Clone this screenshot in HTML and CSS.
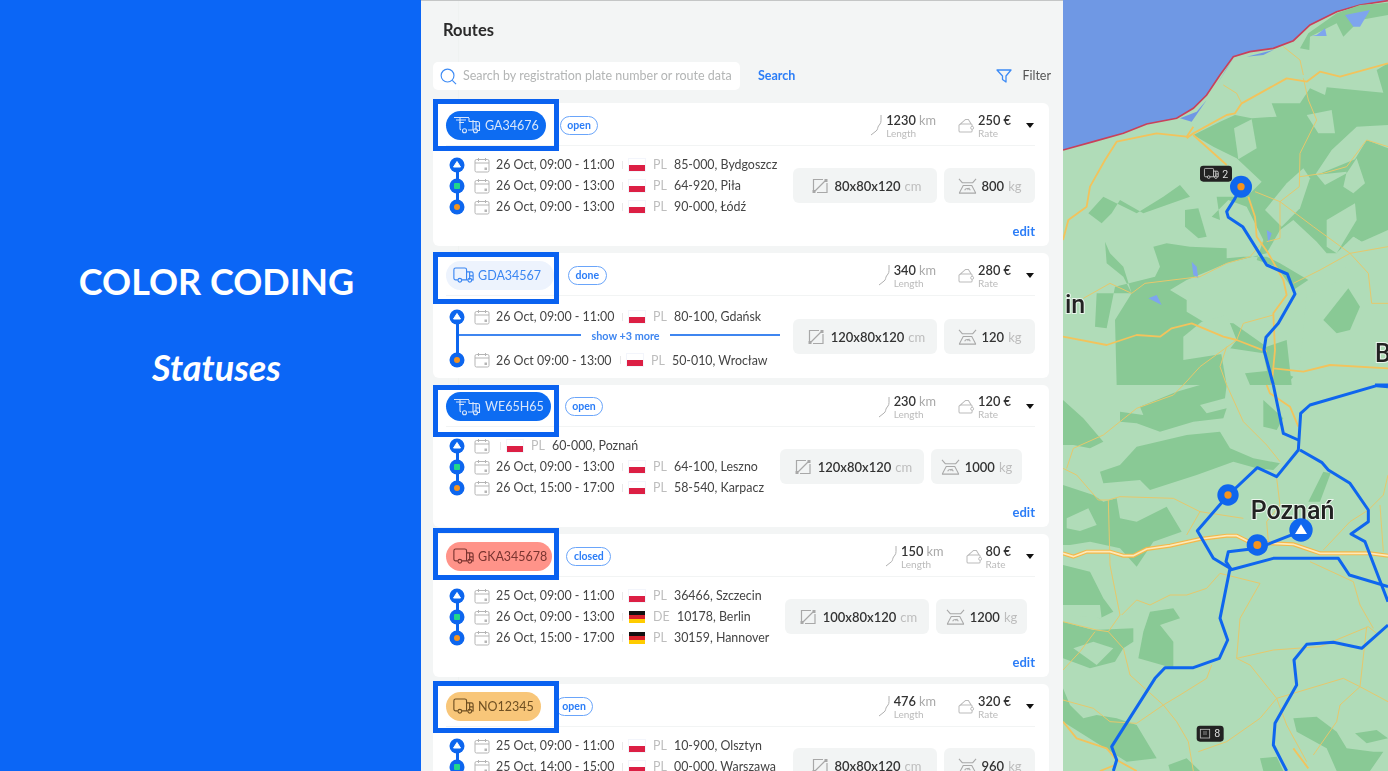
FILE: index.html
```html
<!DOCTYPE html>
<html lang="en">
<head>
<meta charset="utf-8">
<title>Routes - Color coding</title>
<link rel="stylesheet" href="styles.css">
</head>
<body>
<svg class="defs" width="0" height="0" aria-hidden="true">
  <symbol id="truck" viewBox="0 0 24 18"><path d="M5.500 14.500H3a2 2 0 0 1-2-2V3a2 2 0 0 1 2-2h10.500a2 2 0 0 1 2 2v11.500H10M15.500 5.500h5.500a2 2 0 0 1 2 2v7h-1.500M15.500 14.500H17M19 5.500v9M19 10h4" fill="none" stroke="currentColor" stroke-width="1.300"/><circle cx="7.800" cy="15" r="2.100" fill="none" stroke="currentColor" stroke-width="1.300"/><circle cx="19.200" cy="15" r="2.100" fill="none" stroke="currentColor" stroke-width="1.300"/></symbol>
  <symbol id="truckfast" viewBox="0 0 28 18"><path d="M1 1.500h15M3 4h10M6 6.500h5M7 2v10.500a1.500 1.500 0 0 0 1 1.500M15 14h5M16 2v3.500M20 4v10M16 5.500h8.500a2 2 0 0 1 2 2v7H25M23 5.500v9M23 10h3.500" fill="none" stroke="currentColor" stroke-width="1.100"/><circle cx="11.500" cy="14.800" r="2" fill="none" stroke="currentColor" stroke-width="1.100"/><circle cx="22.500" cy="14.800" r="2" fill="none" stroke="currentColor" stroke-width="1.100"/></symbol>
  <symbol id="cal" viewBox="0 0 16 16"><path d="M2.500 2.500h11a1.500 1.500 0 0 1 1.500 1.500v9.500a1.500 1.500 0 0 1-1.500 1.500h-11A1.500 1.500 0 0 1 1 13.500V4a1.500 1.500 0 0 1 1.500-1.500zM1 6h14M4.500 1v3M11.500 1v3" fill="none" stroke="#b5b5b5"/><rect x="10.500" y="10.500" width="2.500" height="2.500" fill="#b5b5b5"/></symbol>
  <symbol id="road" viewBox="0 0 12 22"><path d="M11 1v5.500c0 1.500-.3 2.500-1 3.500L8.500 12c-.5.800-.7 1.500-.9 2.500-.2 1-.5 1.700-1.500 2.500L1 21" fill="none" stroke="#b0b0b0" stroke-width="1"/></symbol>
  <symbol id="wallet" viewBox="0 0 18 16"><path d="M1 7.500 8 1.500h3l3 5M1 7.500V13.500A1.500 1.500 0 0 0 2.500 15h11a1.500 1.500 0 0 0 1.500-1.500V12M1 7.500 3 6.500h11a1.500 1.500 0 0 1 1 1.500v1" fill="none" stroke="#bbb" stroke-width="1.100"/><circle cx="15" cy="10.500" r="1.600" fill="#fff" stroke="#bbb"/></symbol>
  <symbol id="size" viewBox="0 0 16 16"><path d="M11 1.500H1.500V12M15 5v9.500H5M3 13 13 3" fill="none" stroke="#a8a8a8" stroke-width="1.200"/><rect x="12.500" y="1" width="3" height="3" fill="#a8a8a8"/><rect x=".500" y="12" width="3" height="3" fill="#a8a8a8"/></symbol>
  <symbol id="weight" viewBox="0 0 20 16"><path d="M1 .500 4.500 4.500H15.500L19 .500M1 15.500H19M1.500 15 5.500 7.500H14.500L18.500 15M7 12.500C8 10 12 10 13 12.500M10 12l2-2" fill="none" stroke="#a8a8a8" stroke-width="1.100"/></symbol>
  <symbol id="pinup" viewBox="0 0 16 16"><circle cx="8" cy="8" r="7.500" fill="#0d66ee"/><path d="M8 4.500l3.500 5.500h-7z" fill="#fff" stroke="#fff" stroke-linejoin="round"/></symbol>
  <symbol id="pinmid" viewBox="0 0 16 16"><circle cx="8" cy="8" r="7.500" fill="#0d66ee"/><rect x="5" y="5" width="6" height="6" rx="1" fill="#22d68a"/></symbol>
  <symbol id="pinend" viewBox="0 0 16 16"><circle cx="8" cy="8" r="7.500" fill="#0d66ee"/><circle cx="8" cy="8" r="3" fill="#f5931e"/></symbol>
</svg>

<main class="page">
  <section class="side">
    <h1 class="side-title">COLOR CODING</h1>
    <p class="side-sub">Statuses</p>
  </section>

  <section class="panel">
    <h2 class="panel-title">Routes</h2>
    <div class="toolbar">
      <div class="search">
        <svg class="search-icon" viewBox="0 0 18 18"><circle cx="8" cy="8" r="6.800" fill="none" stroke="#3d8bf5" stroke-width="1.200"/><path d="M13 13l4 4" stroke="#3d8bf5" stroke-width="1.200"/></svg>
        <span class="search-text">Search by registration plate number or route data</span>
      </div>
      <a class="search-link">Search</a>
      <div class="filter">
        <svg class="filter-icon" viewBox="0 0 16 14"><path d="M1 1h14L10 7v6L6.500 10.500V7z" fill="none" stroke="#3d8bf5" stroke-width="1.300" stroke-linejoin="round"/></svg>
        <span>Filter</span>
      </div>
    </div>

    <div class="cards">
      <!-- 1 -->
      <article class="card">
        <span class="mark mark-1"></span>
        <header class="card-head">
          <span class="badge badge-open"><svg class="ico-fast"><use href="#truckfast"/></svg>GA34676</span>
          <span class="tag">open</span>
          <div class="stats">
            <div class="stat"><svg class="ico-road"><use href="#road"/></svg><div><div class="val">1230 <i>km</i></div><div class="lab">Length</div></div></div>
            <div class="stat"><svg class="ico-wallet"><use href="#wallet"/></svg><div><div class="val">250 €</div><div class="lab">Rate</div></div></div>
            <span class="caret"></span>
          </div>
        </header>
        <div class="card-body">
          <div class="stops">
            <div class="stop"><svg class="pin"><use href="#pinup"/></svg><svg class="cal"><use href="#cal"/></svg><span class="date">26 Oct, 09:00 - 11:00</span><span class="flag pl"></span><span class="cc">PL</span><span class="addr">85-000, Bydgoszcz</span></div>
            <div class="stop"><svg class="pin"><use href="#pinmid"/></svg><svg class="cal"><use href="#cal"/></svg><span class="date">26 Oct, 09:00 - 13:00</span><span class="flag pl"></span><span class="cc">PL</span><span class="addr">64-920, Piła</span></div>
            <div class="stop"><svg class="pin"><use href="#pinend"/></svg><svg class="cal"><use href="#cal"/></svg><span class="date">26 Oct, 09:00 - 13:00</span><span class="flag pl"></span><span class="cc">PL</span><span class="addr">90-000, Łódź</span></div>
          </div>
          <div class="specs">
            <div class="spec spec-size"><svg class="ico-size"><use href="#size"/></svg><b>80x80x120</b><i>cm</i></div>
            <div class="spec spec-weight"><svg class="ico-weight"><use href="#weight"/></svg><b>800</b><i>kg</i></div>
          </div>
        </div>
        <a class="edit">edit</a>
      </article>

      <!-- 2 -->
      <article class="card">
        <span class="mark mark-2"></span>
        <header class="card-head">
          <span class="badge badge-done"><svg class="ico-truck"><use href="#truck"/></svg>GDA34567</span>
          <span class="tag">done</span>
          <div class="stats">
            <div class="stat"><svg class="ico-road"><use href="#road"/></svg><div><div class="val">340 <i>km</i></div><div class="lab">Length</div></div></div>
            <div class="stat"><svg class="ico-wallet"><use href="#wallet"/></svg><div><div class="val">280 €</div><div class="lab">Rate</div></div></div>
            <span class="caret"></span>
          </div>
        </header>
        <div class="card-body card-body-short">
          <div class="stops stops-long">
            <div class="stop"><svg class="pin"><use href="#pinup"/></svg><svg class="cal"><use href="#cal"/></svg><span class="date">26 Oct, 09:00 - 11:00</span><span class="flag pl"></span><span class="cc">PL</span><span class="addr">80-100, Gdańsk</span></div>
            <div class="more"><span class="more-line more-left"></span><span class="more-text">show +3 more</span><span class="more-line more-right"></span></div>
            <div class="stop stop-tight"><svg class="pin"><use href="#pinend"/></svg><svg class="cal"><use href="#cal"/></svg><span class="date date-short">26 Oct 09:00 - 13:00</span><span class="flag pl"></span><span class="cc">PL</span><span class="addr">50-010, Wrocław</span></div>
          </div>
          <div class="specs specs-raised">
            <div class="spec spec-size"><svg class="ico-size"><use href="#size"/></svg><b>120x80x120</b><i>cm</i></div>
            <div class="spec spec-weight"><svg class="ico-weight"><use href="#weight"/></svg><b>120</b><i>kg</i></div>
          </div>
        </div>
      </article>

      <!-- 3 -->
      <article class="card card-slim">
        <span class="mark mark-3"></span>
        <header class="card-head">
          <span class="badge badge-open"><svg class="ico-fast"><use href="#truckfast"/></svg>WE65H65</span>
          <span class="tag">open</span>
          <div class="stats">
            <div class="stat"><svg class="ico-road"><use href="#road"/></svg><div><div class="val">230 <i>km</i></div><div class="lab">Length</div></div></div>
            <div class="stat"><svg class="ico-wallet"><use href="#wallet"/></svg><div><div class="val">120 €</div><div class="lab">Rate</div></div></div>
            <span class="caret"></span>
          </div>
        </header>
        <div class="card-body">
          <div class="stops">
            <div class="stop"><svg class="pin"><use href="#pinup"/></svg><svg class="cal"><use href="#cal"/></svg><span class="flag pl flag-nodate"></span><span class="cc">PL</span><span class="addr">60-000, Poznań</span></div>
            <div class="stop"><svg class="pin"><use href="#pinmid"/></svg><svg class="cal"><use href="#cal"/></svg><span class="date">26 Oct, 09:00 - 13:00</span><span class="flag pl"></span><span class="cc">PL</span><span class="addr">64-100, Leszno</span></div>
            <div class="stop"><svg class="pin"><use href="#pinend"/></svg><svg class="cal"><use href="#cal"/></svg><span class="date">26 Oct, 15:00 - 17:00</span><span class="flag pl"></span><span class="cc">PL</span><span class="addr">58-540, Karpacz</span></div>
          </div>
          <div class="specs specs-inset-l">
            <div class="spec spec-size"><svg class="ico-size"><use href="#size"/></svg><b>120x80x120</b><i>cm</i></div>
            <div class="spec spec-weight"><svg class="ico-weight"><use href="#weight"/></svg><b>1000</b><i>kg</i></div>
          </div>
        </div>
        <a class="edit">edit</a>
      </article>

      <!-- 4 -->
      <article class="card">
        <span class="mark mark-4"></span>
        <header class="card-head">
          <span class="badge badge-closed"><svg class="ico-truck"><use href="#truck"/></svg>GKA345678</span>
          <span class="tag">closed</span>
          <div class="stats">
            <div class="stat"><svg class="ico-road"><use href="#road"/></svg><div><div class="val">150 <i>km</i></div><div class="lab">Length</div></div></div>
            <div class="stat"><svg class="ico-wallet"><use href="#wallet"/></svg><div><div class="val">80 €</div><div class="lab">Rate</div></div></div>
            <span class="caret"></span>
          </div>
        </header>
        <div class="card-body">
          <div class="stops">
            <div class="stop"><svg class="pin"><use href="#pinup"/></svg><svg class="cal"><use href="#cal"/></svg><span class="date">25 Oct, 09:00 - 11:00</span><span class="flag pl"></span><span class="cc">PL</span><span class="addr">36466, Szczecin</span></div>
            <div class="stop"><svg class="pin"><use href="#pinmid"/></svg><svg class="cal"><use href="#cal"/></svg><span class="date">26 Oct, 09:00 - 13:00</span><span class="flag de"></span><span class="cc cc-wide">DE</span><span class="addr">10178, Berlin</span></div>
            <div class="stop"><svg class="pin"><use href="#pinend"/></svg><svg class="cal"><use href="#cal"/></svg><span class="date">26 Oct, 15:00 - 17:00</span><span class="flag de"></span><span class="cc">PL</span><span class="addr">30159, Hannover</span></div>
          </div>
          <div class="specs specs-inset-s">
            <div class="spec spec-size"><svg class="ico-size"><use href="#size"/></svg><b>100x80x120</b><i>cm</i></div>
            <div class="spec spec-weight"><svg class="ico-weight"><use href="#weight"/></svg><b>1200</b><i>kg</i></div>
          </div>
        </div>
        <a class="edit">edit</a>
      </article>

      <!-- 5 -->
      <article class="card">
        <span class="mark mark-5"></span>
        <header class="card-head">
          <span class="badge badge-late"><svg class="ico-truck"><use href="#truck"/></svg>NO12345</span>
          <span class="tag">open</span>
          <div class="stats">
            <div class="stat"><svg class="ico-road"><use href="#road"/></svg><div><div class="val">476 <i>km</i></div><div class="lab">Length</div></div></div>
            <div class="stat"><svg class="ico-wallet"><use href="#wallet"/></svg><div><div class="val">320 €</div><div class="lab">Rate</div></div></div>
            <span class="caret"></span>
          </div>
        </header>
        <div class="card-body card-body-top">
          <div class="stops">
            <div class="stop"><svg class="pin"><use href="#pinup"/></svg><svg class="cal"><use href="#cal"/></svg><span class="date">25 Oct, 09:00 - 11:00</span><span class="flag pl"></span><span class="cc">PL</span><span class="addr">10-900, Olsztyn</span></div>
            <div class="stop"><svg class="pin"><use href="#pinmid"/></svg><svg class="cal"><use href="#cal"/></svg><span class="date">25 Oct, 14:00 - 15:00</span><span class="flag pl"></span><span class="cc">PL</span><span class="addr">00-000, Warszawa</span></div>
          </div>
          <div class="specs specs-low">
            <div class="spec spec-size"><svg class="ico-size"><use href="#size"/></svg><b>80x80x120</b><i>cm</i></div>
            <div class="spec spec-weight"><svg class="ico-weight"><use href="#weight"/></svg><b>960</b><i>kg</i></div>
          </div>
        </div>
      </article>
    </div>
  </section>

  <section class="map">
    <svg class="map-svg" viewBox="9 0 975 2313" preserveAspectRatio="none">
      <rect x="9" y="0" width="975" height="2313" fill="#b0dcb8"/>
      <!-- sea -->
      <path class="sea" d="M9 0H984V2L900 15 830 35 750 75 700 122 640 145 570 155 520 170 480 225 440 285 400 325 350 355 260 372 190 400 100 425 9 450z"/>
      <path d="M360 355 410 335 440 300 395 365zM500 205 470 255 520 175zM640 150 560 170 610 165z" fill="#6f98e4"/>
      <path d="M9 450 100 425 190 400 260 372 350 355 400 325 440 285 480 225 520 170 570 155 640 145 700 122 750 75 830 35 900 15 984 2" fill="none" stroke="#c9405a" stroke-width="5"/>
      <!-- top half woods -->
      <g class="wood">
        <path d="M400 405 480 365 525 345 575 355 650 350 635 310 720 310 750 265 795 285 800 262 970 278 950 210 984 190V720L905 725 880 710 830 760 800 760 770 725 700 660 660 690 620 760 560 775 500 790 440 815 380 840 330 870 380 900 380 935 430 965 520 970 620 1040 680 1020 695 1155H170L165 960 215 880 190 800 150 760 135 725 140 790 190 830 215 880 110 880 105 980 140 985 165 860 285 830 300 800 280 740 320 730 390 740 500 745 500 775 550 770 555 770 620 770 660 790 745 840 700 870 650 800 590 780 610 720 560 620 505 600 455 650 480 660 470 590 500 590 560 590 605 545 530 475 460 440 400 405z"/>
        <path d="M85 640 130 590 230 640 310 590 360 555 390 590 250 640 180 600 155 640 125 670z"/>
        <path d="M375 630 415 625 440 710 415 715 375 680z"/>
        <path d="M720 145 745 100 830 40 900 15 984 8V45L900 60 850 110 830 70 750 110 748 150z"/>
      </g>
      <g class="light">
        <path d="M522 385 575 358 590 445 535 478z"/>
        <path d="M740 345 815 330 825 400 775 400z"/>
        <path d="M815 450 890 380 984 375V445L920 420 885 478 770 525 795 555 860 520 890 475 915 550 880 580 850 560 860 515 765 525z"/>
        <path d="M615 630 680 550 730 505 750 535 720 625 665 680z"/>
        <path d="M800 660 885 610 890 660 830 760 800 740z"/>
        <path d="M830 760 880 710 905 725 984 690V1155H700L720 1100 740 880 790 870 850 830 860 790 830 760z"/>
        <path d="M790 960 865 865 900 920 870 990 830 1000z" class="wood-fill"/>
        <path d="M425 965 500 945 530 1020 500 1060 370 1080 370 1010z"/>
        <path d="M480 1040 610 1060 630 1155H500z"/>
        <path d="M555 1120 650 1110 700 1130 680 1155H570z" class="wood-fill"/>
      </g>
      <path d="M770 105 795 85 800 108 755 108zM855 45 930 30 900 80 880 80zM620 690 635 700 625 730zM395 785 410 800 415 835 400 825zM265 895 290 885 305 915z" fill="#7ea5ee"/>
      <!-- top roads -->
      <g class="road">
        <path d="M670 140 720 180 730 225 M490 255 530 280 545 310M730 235 745 300 770 360 720 460 718 560 660 605 660 715 620 725M660 605 760 680 870 760 925 820 935 910H984M870 760 984 740M585 575 660 605M720 530 790 520 860 500 920 420 984 440M700 850 780 810 870 760M420 830 500 790 570 770 610 725M70 895 150 850 215 880 255 850 420 830M370 1155 420 1100 530 1020 550 970 640 945M500 1040 480 1100 500 1155"/>
      </g>
      <g class="road road-main">
        <path d="M380 415 400 400 500 345 525 340 545 310 680 235 740 245 780 215 840 230 984 190M9 720 25 660 80 620 90 560 135 480 170 425 290 400 380 410 400 380M400 405 500 495M565 590 585 650 590 710 625 760 670 840 680 885 640 940 645 1050 635 1155M9 1010 140 1035 230 1005 300 1010 335 985 395 970 490 1010 530 1020 620 1055M640 1105 730 1115 810 1095 984 1105"/>
      </g>
      <!-- bottom half -->
      <g transform="translate(0 1155)">
        <g class="wood">
          <path d="M120 260 180 240 230 185 380 150 480 140 510 190 580 220 660 235 640 255 590 250 520 230 410 270 270 315 240 285 130 295z"/>
          <path d="M180 80 250 90 240 65 350 20 420 0H500L495 40 420 60 440 85 500 70 490 100 400 110 300 140 230 115 180 110z"/>
          <path d="M9 45 70 100 130 170 90 190 40 180H9z"/>
          <path d="M9 300 100 330 130 350 170 340 180 400 230 410 320 365 365 440 280 470 230 545 180 490 90 470 30 480H9z"/>
          <path d="M9 540 90 560 130 640 160 680 120 700 9 660z"/>
          <path d="M9 710 100 735 220 730 220 770 190 790 165 830 90 850 9 820z"/>
          <path d="M270 680 340 670 360 700 300 720 340 770 340 850 235 820 250 740z"/>
          <path d="M9 910 30 960 70 1000 110 990 170 1000 230 1020 290 1120 200 1130 120 1080 9 1010z"/>
          <path d="M610 45 670 100 650 135 610 125z"/>
          <path d="M790 260 812 265 780 350 745 350z"/>
          <path d="M700 1000 770 995 830 1040 860 1090 940 1100 970 1100 930 1158H830L800 1090 710 1040z"/>
          <path d="M885 1045 950 1035 984 1060 920 1075z"/>
          <path d="M325 1140 380 1120 420 1158H330zM600 1120 650 1115 670 1158H610z"/>
        </g>
        <g class="light">
          <path d="M20 400 85 370 110 420 60 438 20 430z"/>
          <path d="M40 790 100 770 160 790 110 840z"/>
          <path d="M9 660 120 660 125 700 9 690z"/>
        </g>
        <g class="road">
          <path d="M500 0 550 110 620 180 660 230M650 280 660 360 620 410 625 470M550 400 420 380 340 340 180 335 145 345 115 345 50 270 9 250M20 250 40 190 130 150 230 70 340 30 370 0M145 345 150 540 180 690 145 740 190 790 210 870 310 960 350 1010 385 1070 400 1158M185 690 230 645 270 660 330 630 380 630 440 610 480 565 600 595 540 700 530 820 570 840 650 940 680 1020 740 1130M9 710 110 735 145 740M9 855 60 800 105 740M530 820 640 795 780 785 925 725 950 745M415 1100 500 1070 600 1000 650 940 850 880 900 905 984 950M900 905 920 725M900 905 840 960 830 1010 760 1110M310 960 360 930 440 880 455 840M9 945 100 970 150 1010 230 1015 310 960M880 590 900 660 940 730M790 495 870 410 925 375 970 330 984 270M960 360 970 500M750 530 880 590M420 380 380 450"/>
        </g>
        <g class="road road-main">
          <path d="M620 0 630 25 690 65 715 125M9 1010 50 1060 140 1090 170 1125 230 1158M120 1158 165 1140M700 1090 745 1150"/>
        </g>
        <path class="road-big" d="M9 505 40 515 80 500H150L190 512H220L260 492 330 482 420 462 500 452H530L570 472 700 478 780 505H930L984 512"/>
        <path class="road-big-in" d="M9 505 40 515 80 500H150L190 512H220L260 492 330 482 420 462 500 452H530L570 472 700 478 780 505H930L984 512"/>
        <!-- routes -->
        <g class="route">
          <path d="M640 0 670 145 715 165"/>
          <path d="M984 5 950 2 750 60 722 85 715 195 650 275 592 248 505 330 412 437 460 520 510 550 480 700 503 765 478 820 400 848H315L285 880 155 1085 170 1125 160 1158"/>
          <path d="M720 195 785 232 805 255 870 295 925 375V410L873 447 915 470 984 650"/>
          <path d="M510 555 640 520H835L868 570 984 605"/>
          <path d="M515 555 498 530 505 500 592 490 720 440"/>
          <path d="M984 720 905 790 820 772 740 778 702 825 710 900 645 1015 640 1080 680 1158"/>
        </g>
        <circle class="mk" cx="504" cy="330" r="32"/><circle class="mk-dot" cx="504" cy="330" r="11"/>
        <circle class="mk" cx="592" cy="480" r="32"/><circle class="mk-dot" cx="592" cy="480" r="12"/>
        <text class="city" x="572" y="403">Poznań</text>
        <circle class="mk" cx="723" cy="435" r="35"/>
        <path d="M723 418 741 447H705z" fill="#fff"/>
        <rect class="tip" x="410" y="1022" width="81" height="48" rx="10"/>
        <rect x="421" y="1033" width="28" height="26" fill="none" stroke="#bbb" stroke-width="2.500"/>
        <path d="M429 1041h12M429 1047h12" stroke="#bbb" stroke-width="2"/>
        <text class="tip-text" x="463" y="1057">8</text>
      </g>
      <!-- top route -->
      <path class="route-solo" d="M543 560 525 595 500 635 505 652 548 680 620 795 682 822 705 882 655 970 618 1012 612 1050 640 1155"/>
      <path class="route-solo" d="M945 1155H984"/>
      <circle class="mk" cx="543" cy="560" r="33"/><circle class="mk-dot" cx="543" cy="560" r="11"/>
      <rect class="tip" x="420" y="497" width="96" height="48" rx="10"/>
      <use href="#truck" x="430" y="503" width="48" height="34" class="tip-icon"/>
      <text class="tip-text" x="487" y="533">2</text>
      <text class="city" x="15" y="938">in</text>
      <text class="city" x="945" y="1086">B</text>
    </svg>
  </section>
</main>
</body>
</html>
```
FILE: styles.css
```css
* { box-sizing: border-box; }
html, body { margin: 0; height: 100%; overflow: hidden; }
body { font-family: "Lato", "Liberation Sans", sans-serif; color: #333; background: #fff; }
.defs { position: absolute; }

.page { display: flex; width: 1388px; height: 771px; overflow: hidden; }

/* left intro */
.side { width: 421px; flex: none; background: #0b66f6; color: #fff; text-align: center; padding: 259px 0 0 12px; }
.side-title { margin: 0; font-size: 36px; line-height: 44px; font-weight: 700; }
.side-sub { margin: 42px 0 0; font-size: 36px; line-height: 44px; font-weight: 700; font-style: italic; }

/* panel */
.panel { width: 642px; flex: none; padding: 0 14px 0 12px; overflow: hidden; border-top: 1px solid #c4c6c6;
  background: linear-gradient(#eff2f1, #eff2f1) 37px 0 / 1px 100% no-repeat, #f3f5f5; filter: blur(.3px); }
.panel-title { margin: 0; padding: 19px 0 0 10px; font-size: 16.500px; line-height: 20px; font-weight: 700; color: #2a2a2a; }
.toolbar { display: flex; align-items: center; margin-top: 22px; height: 28px; }
.search { display: flex; align-items: center; width: 307px; height: 28px; padding-left: 7px; background: #fff; border-radius: 5px; }
.search-icon { width: 17px; height: 17px; flex: none; }
.search-text { margin-left: 6px; font-size: 12.500px; line-height: 28px; color: #b3b5b5; white-space: nowrap; }
.search-link { margin-left: 18px; font-size: 12.500px; line-height: 28px; font-weight: 700; color: #2b7df7; }
.filter { display: flex; align-items: center; margin-left: auto; margin-right: -2px; font-size: 12.500px; line-height: 28px; color: #555; }
.filter-icon { width: 16px; height: 14px; margin-right: 10px; }

.cards { display: flex; flex-direction: column; gap: 7px; margin-top: 13px; }
.card { position: relative; flex: none; background: #fff; border-radius: 6px; padding: 0 14px 0 13px; }
.mark { position: absolute; left: 0; width: 126px; height: 52px; border: 5px solid #0a62f0; z-index: 2; }
.mark-1 { top: -4px; }
.mark-2 { top: -1px; }
.mark-3 { top: 0; }
.mark-4 { top: -6px; }
.mark-5 { top: -3px; }

.card-head { display: flex; align-items: center; height: 43px; padding-top: 2px; border-bottom: 1px solid #f2f4f4; }
.card-slim .card-head { height: 42px; }
.badge { display: inline-flex; align-items: center; height: 29px; padding: 0 7px; border-radius: 15px; font-size: 12.500px; white-space: nowrap; }
.badge-open { background: #0d6cf2; color: #d8e6fb; }
.badge-done { background: #edf3fd; color: #3a86f2; padding-right: 13px; }
.badge-closed { background: #ff9389; color: #7a3430; padding-right: 5px; }
.badge-late { background: #f8c679; color: #6e4f22; }
.ico-fast { width: 28px; height: 18px; margin-right: 4px; }
.ico-truck { width: 21px; height: 16px; margin-right: 4px; }
.tag { margin-left: 14px; height: 19px; padding: 0 6.500px; border: 1px solid #6aa5fa; border-radius: 10px; font-size: 10.500px; line-height: 16px; font-weight: 700; color: #2b7df7; }

.stats { display: flex; align-items: center; margin-left: auto; }
.stat { display: flex; align-items: center; margin-right: 22px; }
.stat + .stat { margin-right: 15px; }
.stat > div { margin-top: 1px; }
.val { font-size: 12.800px; line-height: 14px; color: #333; font-weight: 600; white-space: nowrap; }
.val i { font-style: normal; font-weight: 400; color: #a9a9a9; }
.lab { font-size: 10px; line-height: 12px; color: #bbb; }
.ico-road { width: 12px; height: 22px; margin-right: 4px; }
.ico-wallet { width: 17px; height: 15px; margin-right: 3px; }
.caret { width: 0; height: 0; margin: 0 1px 0 0; border: 4.500px solid transparent; border-top: 5.500px solid #111; border-bottom: 0; }

.card-body { display: flex; align-items: center; padding-top: 8px; }
.stops { display: flex; flex-direction: column; padding-left: 3px; position: relative; }
.stops::before { content: ""; position: absolute; left: 10px; top: 11px; bottom: 11px; width: 3px; background: #0d66ee; }
.stop { display: flex; align-items: center; height: 21px; position: relative; font-size: 12.400px; color: #444; white-space: nowrap; }
.pin { width: 16px; height: 16px; flex: none; position: relative; }
.cal { width: 16px; height: 16px; flex: none; margin-left: 9px; }
.date { margin-left: 6px; width: 126px; }
.date-short { width: 124px; }
.flag { width: 16px; height: 12px; flex: none; position: relative; margin-left: 7px; }
.flag::before { content: ""; position: absolute; left: -7px; top: 2px; height: 8px; width: 1px; background: #e8e8e8; }
.pl { background: linear-gradient(#fff 50%, #dc1f44 50%); box-shadow: 0 0 0 1px #f3f5fb; }
.de { background: linear-gradient(#111 33%, #d8202a 33%, #d8202a 66%, #fc0 66%); }
.flag-nodate { margin-left: 17px; }
.cc { margin-left: 8px; width: 21px; color: #bdbdbd; }
.cc-wide { width: 24px; }
.addr { color: #444; }

.specs { display: flex; gap: 7px; margin-left: auto; }
.specs-inset-l { margin-right: 13px; }
.specs-inset-s { margin-right: 8px; }
.specs-raised { margin-bottom: 6px; }
.card-body-top { align-items: flex-start; }
.specs-low { margin-top: 13px; }
.spec { display: flex; align-items: center; justify-content: center; height: 35px; background: #f2f4f4; border-radius: 6px; font-size: 13px; }
.spec b { font-weight: 600; color: #333; }
.spec i { font-style: normal; color: #bdbdbd; margin-left: 4px; }
.spec-size { width: 144px; padding-left: 3px; }
.spec-weight { width: 91px; }
.ico-size { width: 16px; height: 16px; margin-right: 7px; }
.ico-weight { width: 19px; height: 16px; margin-right: 5px; }

.edit { display: block; text-align: right; margin-top: 7px; padding-bottom: 8px; font-size: 13px; line-height: 14px; font-weight: 700; color: #2b7df7; }

.card-body-short { padding-top: 10px; padding-bottom: 5px; }
.stops-long::before { bottom: 13px; }
.more { display: flex; align-items: center; height: 16px; margin-left: 8px; }
.more-line { height: 2px; background: #3f86f0; }
.more-left { width: 124px; }
.more-right { width: 110px; }
.more-text { width: 89px; text-align: center; font-size: 10.800px; font-weight: 700; color: #3f86f0; white-space: nowrap; }
.stop-tight { height: 30px; padding-top: 4px; }

/* map */
.map { flex: 1; position: relative; overflow: hidden; }
.map-svg { display: block; width: 325px; height: 771px; filter: blur(.5px); }
.sea { fill: #6f98e4; }
.wood path { fill: #89c995; }
.light path { fill: #b0dcb8; }
.light path.wood-fill { fill: #89c995; }
.road path { fill: none; stroke: #e6c86c; stroke-width: 3; stroke-linejoin: round; }
.road-main path { stroke: #f2c35c; stroke-width: 5.500; }
.road-big { fill: none; stroke: #f4b84a; stroke-width: 12; }
.road-big-in { fill: none; stroke: #fde9b8; stroke-width: 5; }
.route path, .route-solo { fill: none; stroke: #0f66ee; stroke-width: 9; stroke-linejoin: round; }
.mk { fill: #0f66ee; }
.mk-dot { fill: #f5931e; }
.city { font-family: "Roboto", "Liberation Sans", sans-serif; font-size: 75px; font-weight: 500; fill: #222; paint-order: stroke; stroke: rgba(255,255,255,.75); stroke-width: 6px; }
.tip { fill: #222; }
.tip-text { font-family: "Roboto", "Liberation Sans", sans-serif; font-size: 32px; fill: #ddd; }
.tip-icon { color: #ddd; }
```
